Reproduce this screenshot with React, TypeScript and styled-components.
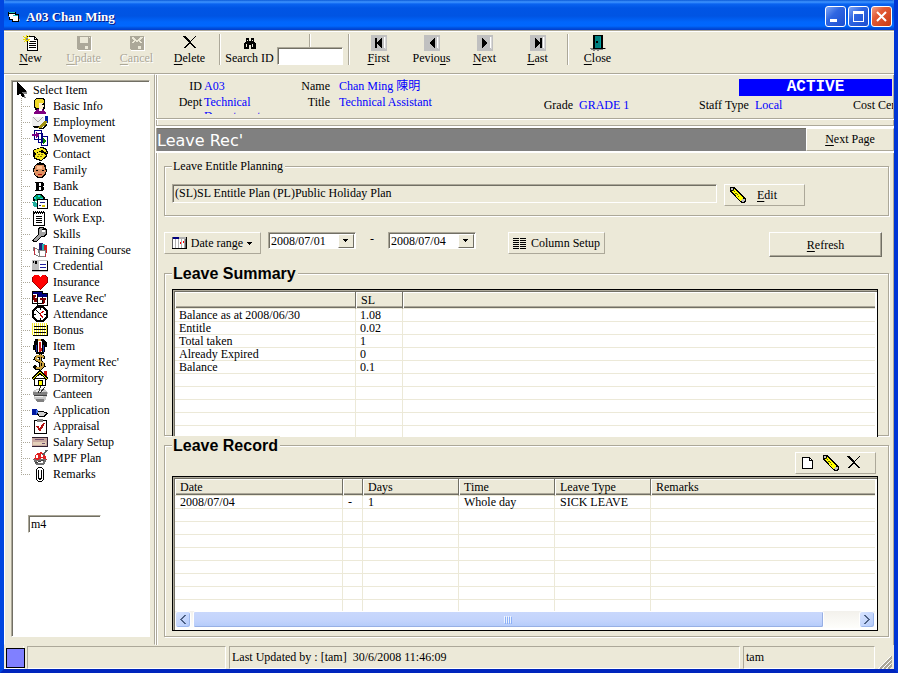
import React from "react";
import styled, { createGlobalStyle, css } from "styled-components";

const FACE = "#ece9d8";
const SHADOW = "#aca899";
const DARK = "#716f64";
const BLUE = "#0000ff";

const Global = createGlobalStyle`
  * { box-sizing: border-box; }
  body { margin: 0; background: ${FACE}; }
  body, button, input, select, table, legend {
    font-family: "Liberation Serif", "Noto Sans CJK TC", serif;
    font-size: 12px;
    line-height: 14px;
    color: #000;
  }
  u { text-underline-offset: 2px; }
`;

/* ---------- shared surfaces ---------- */

const raised = css`
  background: ${FACE};
  border: 1px solid;
  border-color: #fff ${SHADOW} ${SHADOW} #fff;
`;

const sunken = css`
  border: 1px solid;
  border-color: ${SHADOW} #fff #fff ${SHADOW};
  box-shadow: inset 1px 1px 0 ${DARK};
`;

const Svg = styled.svg`
  display: block;
  flex: none;
  shape-rendering: crispEdges;
`;

const Icon = ({ children, w = 16, h = 16 }: { children: React.ReactNode; w?: number; h?: number }) => (
  <Svg width={w} height={h} viewBox={`0 0 ${w} ${h}`} aria-hidden="true">{children}</Svg>
);

/* ---------- window frame ---------- */

const Window = styled.div`
  min-height: 100vh;
  display: flex;
  flex-direction: column;
  background: ${FACE};
  border: solid;
  border-width: 0 4px 4px;
  border-color: transparent #0035d5 #0025bd #0046e0;
  overflow: hidden;
`;

const TitleBar = styled.header`
  display: flex;
  align-items: center;
  gap: 6px;
  height: 30px;
  margin: 0 -4px;
  padding: 3px 6px 0 8px;
  border-radius: 6px 6px 0 0;
  background: linear-gradient(#0a5ad8 0, #3f95ff 2px, #0a63f0 4px, #0055e5 8px, #0054e3 16px, #0066fc 22px, #0067ff 26px, #0050dc 28px, #003dd0 30px);
`;

const Title = styled.h1`
  flex: 1;
  margin: 0;
  font-size: 13px;
  line-height: 16px;
  font-weight: bold;
  color: #fff;
  text-shadow: 1px 1px 0 #0a1883;
`;

const Controls = styled.div`
  display: flex;
  gap: 2px;
`;

const ControlButton = styled.button<{ $close?: boolean }>`
  width: 21px;
  height: 21px;
  padding: 2px;
  border: 1px solid #fff;
  border-radius: 3px;
  background: ${(p) =>
    p.$close
      ? "linear-gradient(135deg, #f0a088, #e35b36 35%, #c83a12)"
      : "linear-gradient(135deg, #7fa6f5, #2f66e2 40%, #1c4ed0)"};
`;

/* ---------- toolbar ---------- */

const Toolbar = styled.nav`
  display: flex;
  height: 43px;
  padding-top: 3px;
  border-top: 1px solid ${SHADOW};
  box-shadow: inset 0 1px 0 #fff;
`;

const ToolButton = styled.button`
  display: flex;
  flex-direction: column;
  align-items: center;
  width: 53px;
  height: 34px;
  padding: 1px 0 0;
  border: 0;
  background: none;
  white-space: nowrap;
  &:disabled { color: ${SHADOW}; text-shadow: 1px 1px 0 #fff; }
`;

const SearchLabel = styled.label`
  display: flex;
  flex-direction: column;
  align-items: center;
  width: 53px;
  padding-top: 1px;
  white-space: nowrap;
`;

const Separator = styled.span<{ $short?: boolean }>`
  width: 2px;
  height: ${(p) => (p.$short ? "13px" : "31px")};
  margin: ${(p) => (p.$short ? "0 auto" : "0 2px 0 3px")};
  border-left: 1px solid ${SHADOW};
  border-right: 1px solid #fff;
`;

const SearchField = styled.div`
  display: flex;
  flex-direction: column;
  width: 69px;
  padding: 0 2px 0 1px;
`;

const Input = styled.input`
  ${sunken}
  width: 100%;
  height: 18px;
  padding: 1px 2px;
  background: #fff;
  outline: 0;
`;

const NavTile = styled.span`
  display: block;
  background: #c0c0c0;
`;

/* ---------- body ---------- */

const Body = styled.div`
  flex: 1;
  display: flex;
  border-top: 1px solid ${SHADOW};
`;

const Sidebar = styled.aside`
  display: flex;
  width: 151px;
  padding: 5px 4px 7px 6px;
  border: 1px solid;
  border-color: #fff ${SHADOW} transparent #fff;
`;

const TreePanel = styled.div`
  ${sunken}
  flex: 1;
  padding: 1px 0 0 1px;
  background: #fff;
`;

const Tree = styled.ul`
  margin: 0;
  padding: 0;
  list-style: none;
`;

const TreeRoot = styled.div`
  display: flex;
  align-items: center;
  gap: 5px;
  height: 16px;
  padding-left: 3px;
`;

const TreeItem = styled.li`
  display: flex;
  align-items: center;
  gap: 5px;
  height: 16px;
  margin-left: 8px;
  padding-left: 11px;
  white-space: nowrap;
  background:
    repeating-linear-gradient(90deg, ${SHADOW} 0 1px, transparent 1px 2px) 0 8px / 10px 1px no-repeat,
    repeating-linear-gradient(${SHADOW} 0 1px, transparent 1px 2px) 0 0 / 1px 16px no-repeat;
  &:last-child {
    background-size: 10px 1px, 1px 9px;
  }
`;

const CodeField = styled.div`
  width: 73px;
  margin: 33px 0 0 15px;
`;

const Main = styled.main`
  flex: 1;
  min-width: 0;
  display: flex;
  flex-direction: column;
  border-left: 1px solid #fff;
  box-shadow: inset 1px 0 0 ${SHADOW}, inset 2px 0 0 #fff, inset -1px 0 0 ${SHADOW};
`;

const Employee = styled.section`
  display: flex;
  height: 46px;
  padding: 4px 1px 0;
  border: solid #fff;
  border-width: 1px 0;
  box-shadow: inset 0 -1px 0 ${SHADOW};
  overflow: hidden;
`;

const FieldGrid = styled.dl<{ $label: number; $value: number; $gap: number; $single?: boolean }>`
  display: grid;
  flex: none;
  grid-template-columns: ${(p) => p.$label}px ${(p) => p.$value}px;
  grid-auto-rows: 16px;
  column-gap: ${(p) => p.$gap}px;
  height: 35px;
  margin: 0;
  padding-top: ${(p) => (p.$single ? "19px" : "0")};
  overflow: hidden;
  dt { text-align: right; }
  dd { margin: 0; color: ${BLUE}; line-height: 14px; }
`;

const StatusGroup = styled.div`
  flex: none;
  width: 194px;
  margin-left: auto;
  overflow: hidden;
`;

const Badge = styled.div`
  width: 153px;
  margin-left: 40px;
  background: ${BLUE};
  color: #fff;
  font: bold 16px/17px "Liberation Mono", monospace;
  text-align: center;
`;

const StaffLine = styled.div`
  display: flex;
  padding-top: 2px;
  white-space: nowrap;
  span { flex: none; }
  span:nth-child(1) { width: 56px; }
  span:nth-child(2) { width: 98px; color: ${BLUE}; }
`;

const PageBar = styled.div`
  display: flex;
  height: 27px;
  margin-top: 6px;
  padding-left: 1px;
  border: solid #fff;
  border-width: 2px 0;
  box-shadow: 0 -1px 0 ${SHADOW};
`;

const PageTitle = styled.h2`
  flex: 1;
  margin: 0;
  background: #808080;
  border-top: 1px solid ${DARK};
  color: #fff;
  font: normal 16px/23px "DejaVu Sans", sans-serif;
`;

const PageButton = styled.button`
  ${raised}
  width: 88px;
  padding: 0 0 2px;
`;

const Content = styled.div`
  flex: 1;
  display: flex;
  flex-direction: column;
  padding: 6px 5px 8px 8px;
`;

const Group = styled.fieldset<{ $fill?: boolean }>`
  display: block;
  min-width: 0;
  margin: 0;
  padding: 0 10px 0 7px;
  flex: ${(p) => (p.$fill ? "1" : "none")};
  border: 1px solid ${SHADOW};
  box-shadow: inset 1px 1px 0 #fff, 1px 1px 0 #fff;
`;

const Legend = styled.legend<{ $large?: boolean }>`
  padding: 0 2px 0 1px;
  background: ${FACE};
  ${(p) =>
    p.$large && css`
      font: bold 16px/19px "Liberation Sans", Arial, sans-serif;
    `}
`;

const PlanRow = styled.div`
  display: flex;
  align-items: flex-start;
  gap: 7px;
  padding: 11px 73px 9px 0;
`;

const PlanInput = styled(Input)`
  flex: 1;
  height: 19px;
  background: ${FACE};
`;

const Button = styled.button<{ $strong?: boolean; $width: number; $height?: number }>`
  ${raised}
  display: flex;
  align-items: center;
  justify-content: center;
  gap: 4px;
  flex: none;
  width: ${(p) => p.$width}px;
  height: ${(p) => p.$height ?? 22}px;
  padding: 0 2px;
  white-space: nowrap;
  ${(p) =>
    p.$strong && css`
      border-color: #fff ${DARK} ${DARK} #fff;
      box-shadow: inset -1px -1px 0 ${SHADOW};
    `}
`;

const EditButton = styled(Button)`
  justify-content: flex-start;
  gap: 11px;
  padding-left: 5px;
`;

const FilterRow = styled.div`
  display: flex;
  align-items: flex-start;
  height: 26px;
  margin: 16px 7px 6px 0;
`;

const Dates = styled.div`
  display: flex;
  margin: 0 32px 0 7px;
`;

const Dash = styled.span`
  width: 32px;
  text-align: center;
`;

const ComboFrame = styled.div`
  ${sunken}
  position: relative;
  width: 88px;
  height: 17px;
  background: #fff;
`;

const Combo = styled.select`
  appearance: none;
  width: 100%;
  height: 15px;
  padding: 0 18px 0 2px;
  border: 0;
  background: transparent;
  outline: 0;
`;

const ComboArrow = styled.span`
  ${raised}
  border-color: #fff ${DARK} ${DARK} #fff;
  position: absolute;
  right: 1px;
  top: 1px;
  width: 16px;
  height: 14px;
  padding: 4px 3px;
  pointer-events: none;
`;

const Push = styled.span`
  flex: 1;
`;

/* ---------- tables ---------- */

const GridFrame = styled.div<{ $height: number; $open?: boolean }>`
  display: flex;
  flex-direction: column;
  height: ${(p) => p.$height}px;
  margin-top: ${(p) => (p.$open ? "6px" : "0")};
  margin-bottom: ${(p) => (p.$open ? "-2px" : "0")};
  padding: 2px 2px 0;
  border: 1px solid #000;
  border-bottom-width: ${(p) => (p.$open ? "0" : "1px")};
  background: #fff;
  box-shadow: inset 1px 1px 0 ${SHADOW}, inset 2px 2px 0 ${DARK};
`;

const GridBody = styled.div`
  flex: 1;
  min-height: 0;
  overflow: hidden;
`;

const Grid = styled.table`
  width: 100%;
  table-layout: fixed;
  border-collapse: separate;
  border-spacing: 0;
  th {
    height: 17px;
    padding: 0 5px;
    text-align: left;
    font-weight: normal;
    line-height: 13px;
    background: ${FACE};
    border-bottom: 1px solid ${FACE};
    box-shadow: inset 1px 1px 0 #fff, inset 0 -1px 0 ${DARK}, inset 0 -2px 0 ${SHADOW};
  }
  th:not(:last-child) { border-right: 1px solid ${DARK}; }
  td {
    height: 13px;
    padding: 0 4px;
    line-height: 12px;
    white-space: nowrap;
    border-bottom: 1px solid ${FACE};
  }
  td:not(:last-child) { border-right: 1px solid ${FACE}; }
`;

const RecordGrid = styled(Grid)`
  td { padding: 0 5px; }
`;

const Col = styled.col<{ $w?: number }>`
  width: ${(p) => (p.$w ? `${p.$w}px` : "auto")};
`;

const RecordTools = styled.div`
  ${raised}
  display: flex;
  align-items: center;
  gap: 7px;
  width: 81px;
  height: 22px;
  margin: -3px 2px 2px auto;
  padding-left: 4px;
`;

const IconButton = styled.button`
  padding: 0;
  border: 0;
  background: none;
`;

const ScrollBar = styled.div`
  display: flex;
  gap: 2px;
  height: 17px;
  margin-bottom: 2px;
  background: linear-gradient(#f3f1ec, #fefefb);
`;

const ScrollButton = styled.button`
  width: 16px;
  height: 17px;
  padding: 3px;
  border: 1px solid #fff;
  border-radius: 3px;
  background: linear-gradient(135deg, #d8e4ff, #b4cafa);
  box-shadow: inset -1px -1px 0 #9db8ee;
`;

const Track = styled.div`
  flex: 1;
  display: flex;
`;

const Thumb = styled.div`
  display: flex;
  align-items: center;
  justify-content: center;
  width: 95%;
  border: 1px solid #fff;
  border-radius: 2px;
  background: linear-gradient(#c9d8fc, #c2d3fc 60%, #b3cbfa);
  box-shadow: inset -1px -1px 0 #98b0e4;
`;

/* ---------- status bar ---------- */

const StatusBar = styled.footer`
  display: flex;
  align-items: stretch;
  gap: 3px;
  height: 24px;
  padding-top: 1px;
`;

const StatusPanel = styled.div<{ $w?: number }>`
  flex: ${(p) => (p.$w ? `0 0 ${p.$w}px` : "1")};
  padding: 3px 2px;
  border: 1px solid;
  border-color: ${SHADOW} #fff #fff ${SHADOW};
  white-space: pre;
`;

const Lamp = styled.div`
  flex: none;
  width: 20px;
  padding: 2px 0 2px 2px;
  border: solid #fff;
  border-width: 0 1px 1px 0;
  &::before {
    content: "";
    display: block;
    width: 17px;
    height: 18px;
    border: 1px solid #000;
    background: #8080ff;
  }
`;

const Grip = styled.div`
  display: flex;
  align-items: flex-end;
  width: 16px;
`;

/* ---------- icon drawings ---------- */

const Floppy = ({ cross }: { cross?: boolean }) => (
  <Icon>
    <path fill="#fff" d="M2 2h14v14H2z" />
    <path fill={SHADOW} d="M1 1h14v14H2l-1-1z" />
    {cross ? (
      <path fill={FACE} d="M3 2h2v1h1v1h1v1h2V4h1V3h1V2h2v2h-1v1h-1v1h1v1h1v1h-2V7h-1V6H9v1H7V6H6v1H5v1H3V7h1V6h1V5H4V4H3z" />
    ) : (
      <path fill={FACE} d="M4 2h8v6H4z" />
    )}
    <path fill={FACE} d="M9 11h3v3H9zM13 2h1v1h-1z" />
  </Icon>
);

const Cross = () => (
  <Icon>
    <path
      stroke="none"
      d="M1 1h3v1h1v1h1v1h1v1h1v1h1V5h1V4h1V3h1V2h1V1h1v1h-1v1h-1v1h-1v1h-1v1H9v2h1v1h1v1h1v1h1v1h1v1h-2v-1h-1v-1h-1v-1H9V9H7v1H6v1H5v1H4v1H2v-1h1v-1h1v-1h1V9h1V8h1V7H6V6H5V5H4V4H3V3H2V2H1z"
    />
  </Icon>
);

const Pencil = () => (
  <Icon>
    <path fill="#000" d="M0 0h4l12 11v3l-2 2h-3L0 4z" />
    <path fill="#ff0" d="M4 2l9 9-3 3-8-10z" />
    <path stroke="#606000" strokeDasharray="1 1" d="M3 3l8 9" />
    <path fill="#c0c0c0" d="M1 1h2v2H1zM12 12h2l1 1-1 2h-2l-1-1z" />
  </Icon>
);

const Arrow = ({ back, bar }: { back?: boolean; bar?: boolean }) => (
  <NavTile>
    <Icon>
      <path fill="#fff" d="M13 2h1v11h-1z" />
      <path fill="#d8d8d8" d="M14 2h1v12h-1z" />
      <g transform={back ? undefined : "translate(16 0) scale(-1 1)"}>
        <path fill="#000" d="M11 3v10h-1v-1H9v-1H8v-1H7V9H6V7h1V6h1V5h1V4h1V3z" />
        {bar && <path fill="#000" d="M4 3h2v10H4z" />}
      </g>
    </Icon>
  </NavTile>
);

const NewDoc = () => (
  <Icon>
    <path fill="#fff" stroke="#000" d="M4.500 1.500h7l3 3v11h-10z" />
    <path fill="none" stroke="#000" d="M11.500 1.500v3h3M6 6.500h7M6 8.500h7M6 10.500h7M6 12.500h7" />
    <path stroke="#e8d800" strokeWidth="1" d="M0 1l7 6M7 0L1 7M0 4.500h7M3.500 0v7" />
    <path fill="#808080" d="M3 3h2v2H3z" />
  </Icon>
);

const Binoculars = () => (
  <Icon>
    <path d="M4 3h3v3h2V3h3v3l2 3v5H9v-4H7v4H2V9l2-3z" />
    <path fill={FACE} d="M5 5h1v1H5zM10 5h1v1h-1zM4 9h1v3H4zM10 9h1v3h-1z" />
  </Icon>
);

const Door = () => (
  <Icon>
    <path fill="#808080" d="M0 13h16v1H0zM3 15h2v1H3zM7 15h2v1H7zM1 14h12v1H1z" />
    <path d="M3 0h10v13h2v1H3z" />
    <path fill="#008080" d="M5 1h6v12H5z" />
    <path fill="#00a0a0" d="M10 2h1v11h-1z" />
    <path d="M6 6h2v2H6z" />
  </Icon>
);

const TREE: [string, React.ReactNode][] = [
  ["Basic Info", <>
    <path fill="#000" d="M4 0h7l2 2v8l-2 3H4L2 9V2z" />
    <path fill="#f0d828" d="M4 1h6l2 2v2H7v5H4L3 8V3z" />
    <path fill="#fff0d0" d="M7 5h4l1 3-1 3H7z" />
    <path fill="#800080" d="M2 14l3-3h5l4 3v2H2z" />
    <path fill="#fff" d="M7 11h3v2H7z" />
    <path d="M10 6h1v1h-1z" />
  </>],
  ["Employment", <>
    <path fill="#f0f0f0" d="M0 3h12v9H0z" />
    <path fill="none" stroke="#a8a8a8" d="M1 3l5 5 5-5" />
    <path d="M1 12h9v2H3l-3-1z" />
    <path fill="#0020a0" d="M13 2h3v7h-3z" />
    <path fill="#a09010" d="M12 7h3l-1 4-5 3H6z" />
    <path d="M12 12l3-3v2l-3 4H7v-1h4z" />
  </>],
  ["Movement", <>
    <path fill="#fff" stroke="#000080" d="M2.500.500h7v9h-7zM6.500 3.500h4v9h-4zM9.500 6.500h6v9h-6z" />
    <path fill="#800080" d="M0 4h4V2l4 3-4 3V6H0z" />
    <path fill="#008000" d="M11 8l4 3-4 3z" />
  </>],
  ["Contact", <>
    <path d="M1 4l8-3 5 1 2 4-1 5-6 4-7-2-1-4z" />
    <path fill="#f5e820" d="M2 4l7-2 4 1 2 4-3-1-2-2-4 2-3 1zM4 7l4-1 5 2 1 2-5 4-6-2z" />
    <path fill="#807000" d="M6 8h2v1H6zM9 8h2v1H9zM5 10h2v1H5zM8 10h2v1H8z" />
  </>],
  ["Family", <>
    <path d="M7 0h2v1h3l2 3 1 5-2 5-3 2H6l-3-2-2-5 1-5 3-3h2z" />
    <path fill="#e09060" d="M4 3h8l2 6-2 4-3 2H7l-4-2-1-4z" />
    <path fill="#ffc090" d="M5 4h5v3H5z" />
    <path d="M4 8h2v1H4zM10 8h2v1h-2z" />
    <path fill="#b01010" d="M6 12h4v1H6z" />
  </>],
  ["Bank", <>
    <path fillRule="evenodd" d="M3 4h8v1h1v3h-1v1h1v3h-1v1H3v-1h1V5H3zM7 5v3h2V5zM7 9v3h2V9z" />
  </>],
  ["Education", <>
    <path d="M4 0h6l3 4v3H1V3z" />
    <path fill="#00a060" d="M4 1h5l2 3v3H3V3z" />
    <path fill="#20d0e0" d="M6 1h2v2H6zM8 4h3v2H8zM2 3h2v2H2z" />
    <path fill="#fff" stroke="#000" d="M5.500 5.500h10v9h-10z" />
    <path fill="#202080" d="M8 8h5v1H8zM7 11h2v1H7z" />
    <path fill="#20b0a0" d="M0 8l3-1 2 3v3H2z" />
    <path fill="#d8c000" d="M10 11h3v2h-3z" />
  </>],
  ["Work Exp.", <>
    <path fill="#fff" stroke="#000" d="M1.500 2.500h11v13h-11z" />
    <path stroke="#000" strokeDasharray="1 1" d="M1 1.500h12M2 3.500h11" />
    <path stroke="#000" d="M4 6.500h6M4 8.500h6M4 10.500h6M4 12.500h6" />
  </>],
  ["Skills", <>
    <path d="M7 1h4l4 2v5l-3 3H9l-5 5H1l-1-2 6-6V4z" />
    <path fill="#a0a0a0" d="M8 2h3l-1 2v2h3V4h1v3l-2 3H9l-5 5H2v-1l5-6V4z" />
    <path fill="#fff" d="M10 4h3v2h-3z" />
  </>],
  ["Training Course", <>
    <path fill="#202070" d="M7 1h4v8H7z" />
    <path fill="#20b0b0" d="M10 2h3v8h-3z" />
    <path fill="#d02020" d="M12 3h3v8h-3z" />
    <path fill="#fff" stroke="#808080" d="M1.500 5.500l5 2 1 7-5-2zM7.500 8.500h6v6h-6z" />
    <path fill="#c03040" d="M2 6h1v7H2zM13 12h1v3h-1z" />
  </>],
  ["Credential", <>
    <path fill="#c0c0c0" d="M0 2h16v12H0z" />
    <path fill="#fff" d="M7 3h8v10H7z" />
    <path d="M1 3h1v2H1zM3 3h2v3H3zM0 12h16v1H0zM15 3h1v10h-1z" />
    <path fill="#2020a0" d="M8 6h6v1H8zM8 9h6v1H8z" />
  </>],
  ["Insurance", <>
    <path fill="#900" d="M2 1h4l2 2 2-2h4l2 3v4l-8 8-8-8V4z" />
    <path fill="#f00" d="M2 1h4l2 2 2-2h3l2 3v4l-7 7-7-7V4z" />
  </>],
  ["Leave Rec'", <>
    <path fill="#fff" stroke="#000" d="M.500 1.500h10v12H.500zM5.500 3.500h10v12h-10z" />
    <path fill="#000080" d="M1 2h9v2H1zM6 4h9v3H6z" />
    <path fill="none" stroke="#800000" strokeWidth="2" d="M4 6H2v3h3M2 11h3M8 9h5l-2 5" />
  </>],
  ["Attendance", <>
    <path fill="#fff" stroke="#000" strokeWidth="2" d="M5 1h6l4 4v6l-4 4H5l-4-4V5z" />
    <path stroke="#c00" d="M8 8l4-3M8 8l3 4" />
    <path stroke="#000" d="M4 4l4 4M8 2v2M8 12v2M2 8h2M12 8h2" />
  </>],
  ["Bonus", <>
    <path fill="#fff" d="M1 1h15v13H1z" />
    <path fill="#f5ea30" d="M0 1h1v12H0zM2 1h1v12H2zM4 1h1v12H4zM6 1h1v12H6zM8 1h1v12H8zM10 1h1v12h-1zM12 1h1v12h-1zM14 1h1v12h-1z" />
    <path d="M2 4h12v1H2zM2 7h12v1H2zM2 10h12v1H2zM1 13h15v1H1zM15 3h1v11h-1z" />
  </>],
  ["Item", <>
    <path d="M3 1h9l3 4v9h-3v2H4v-2H1V9z" />
    <path fill="#fff" d="M1 12h2v3H1zM6 3h4v11H6zM13 9h2v5h-2z" />
    <path fill="#d01818" d="M7 4h2v3l1 5-2 3-1-3z" />
    <path fill="#2038b0" d="M4 7h1v7H4zM11 7h1v7h-1z" />
    <path fill="#e8b050" d="M6 1h3v2H6z" />
  </>],
  ["Payment Rec'", <>
    <path fill="none" stroke="#000" strokeWidth="3" d="M13 4L10 2H5L3 5l3 2 5 2 1 3-3 2H4l-2-2M8 0v16" />
    <path fill="none" stroke="#c8a040" strokeWidth="2" d="M12 4L10 2H5L4 5l3 2 4 2v3l-2 2H4" />
    <path fill="none" stroke="#c8a040" d="M8.500 0v16" />
  </>],
  ["Dormitory", <>
    <path fill="#d01010" d="M12 1h3v5h-3z" />
    <path fill="#fff" stroke="#000" d="M2.500 8.500h11v7h-11z" />
    <path fill="#ff0" stroke="#000" d="M8 .500L.500 8l1 1.500L8 3.500l6.500 6 1-1.500z" />
    <path fill="#ff0" stroke="#000" d="M6.500 10.500h4v5h-4z" />
  </>],
  ["Canteen", <>
    <path fill="#c8c8c8" d="M1 5l4-2h7l4 3-2 7-3 3H5l-3-3z" />
    <path fill="#808080" d="M1 6h14v3H1zM4 13h8v3H5z" />
    <path fill="#eee" d="M4 4h7v2H4zM3 10h8v1H3z" />
    <path stroke="#303030" d="M9 0L6 7M13 1L8 7" />
    <path fill="#404040" d="M2 9h13v1H2z" />
  </>],
  ["Application", <>
    <path fill="#0018a0" d="M0 7h5v6H0z" />
    <path fill="#4070e0" d="M4 8h2v4H4z" />
    <path d="M6 9h5l5 2-1 2-3 2H7l-2-2z" />
    <path fill="#d0d0d0" d="M6 10h4l4 1-3 3H7z" />
  </>],
  ["Appraisal", <>
    <path fill="#fff" stroke="#000" d="M2.500 2.500h12v13h-12z" />
    <path fill="#808080" d="M5 1h6v3H5z" />
    <path fill="none" stroke="#b01010" strokeWidth="2" d="M5 8l3 4 4-7" />
  </>],
  ["Salary Setup", <>
    <path fill="#302030" d="M0 3h16v10H0z" />
    <path fill="#c8a8a0" d="M0 4h15v8H0z" />
    <path fill="#e4d0b8" d="M1 8h13v3H1z" />
    <path fill="#705070" d="M3 5h9v1H3zM10 9h3v1h-3z" />
  </>],
  ["MPF Plan", <>
    <path fill="#707070" d="M1 9h14l-3 6H4z" />
    <path fill="#e02020" d="M2 9l2-5 5-2 4 3 2 5-5-2-4 2z" />
    <path fill="#fff" d="M4 5h2v3H4zM9 4h2v3H9zM5 11h6v2H5z" />
    <path stroke="#606060" strokeWidth="2" d="M11 5l4-5" />
    <path stroke="#404040" d="M3 13l9-3" />
  </>],
  ["Remarks", <>
    <path fill="none" stroke="#000" d="M4.500 11V3.500l2-2h3l2 2v10l-2 2h-3l-2-2v-3M6.500 4v8l1 1h1l1-1V4" />
  </>],
];

const Calendar = () => (
  <Icon w={15}>
    <path fill="#fff" stroke="#606060" d="M.500 2.500h13v11H.500z" />
    <path fill="#000080" d="M1 2h6v2H1z" />
    <path fill="#b0b0b0" d="M7 2h7v2H7zM3 4h1v9H3zM6 4h1v9H6zM9 4h1v9H9zM12 4h1v9h-1z" />
    <path fill="#f00" d="M8 7h1v2H8zM11 6h1v2h-1z" />
    <path d="M14 2h1v12h-1zM0 13h15v1H0z" />
  </Icon>
);

const DropMark = () => (
  <Icon w={6} h={3}><path d="M0 0h5v1H4v1H3v1H2V2H1V1H0z" /></Icon>
);

const Dropdown = ({ label, value }: { label: string; value: string }) => (
  <ComboFrame>
    <Combo aria-label={label} defaultValue={value}>
      <option>{value}</option>
    </Combo>
    <ComboArrow><Icon w={8} h={4}><path d="M1 0h5v1H5v1H4v1H3V2H2V1H1z" /></Icon></ComboArrow>
  </ComboFrame>
);

const summary = [
  ["Balance as at 2008/06/30", "1.08"],
  ["Entitle", "0.02"],
  ["Total taken", "1"],
  ["Already Expired", "0"],
  ["Balance", "0.1"],
  [], [], [], [], [],
];

const records = [["2008/07/04", "-", "1", "Whole day", "SICK LEAVE", ""], [], [], [], [], [], [], [], []];

const Rows = ({ rows, columns }: { rows: string[][]; columns: number }) => (
  <tbody>
    {rows.map((row, r) => (
      <tr key={r}>
        {Array.from({ length: columns }, (_, c) => <td key={c}>{row[c]}</td>)}
      </tr>
    ))}
  </tbody>
);

export default function App() {
  return (
    <>
      <Global />
      <Window>
        <TitleBar>
          <Icon w={12} h={12}>
            <path fill="#000" d="M0 1h8v2h3v8H4V9H1z" />
            <path fill="#fff" d="M1 3h6v5H2zM4 5h6v5H5z" />
            <path fill="#20c0c0" d="M1 1h6v1H1zM5 4h5v1H5z" />
            <path fill="#a0a0a0" d="M11 8h1v2h-1z" />
          </Icon>
          <Title>A03 Chan Ming</Title>
          <Controls>
            <ControlButton aria-label="Minimize">
              <Icon w={15} h={15}><path fill="#fff" d="M2 10h7v3H2z" /></Icon>
            </ControlButton>
            <ControlButton aria-label="Maximize">
              <Icon w={15} h={15}><path fill="#fff" fillRule="evenodd" d="M2 2h11v11H2zM3 5v7h9V5z" /></Icon>
            </ControlButton>
            <ControlButton $close aria-label="Close window">
              <Icon w={15} h={15}><path fill="none" stroke="#fff" strokeWidth="2" shapeRendering="auto" d="M3 3l9 9M12 3l-9 9" /></Icon>
            </ControlButton>
          </Controls>
        </TitleBar>

        <Toolbar>
          <ToolButton><NewDoc /><span><u>N</u>ew</span></ToolButton>
          <ToolButton disabled><Floppy /><span><u>U</u>pdate</span></ToolButton>
          <ToolButton disabled><Floppy cross /><span><u>C</u>ancel</span></ToolButton>
          <ToolButton><Cross /><span><u>D</u>elete</span></ToolButton>
          <Separator />
          <SearchLabel htmlFor="search"><Binoculars />Search ID</SearchLabel>
          <SearchField>
            <Separator $short />
            <Input id="search" />
          </SearchField>
          <Separator />
          <ToolButton><Arrow back bar /><span><u>F</u>irst</span></ToolButton>
          <ToolButton><Arrow back /><span>Pevio<u>u</u>s</span></ToolButton>
          <ToolButton><Arrow /><span><u>N</u>ext</span></ToolButton>
          <ToolButton><Arrow bar /><span><u>L</u>ast</span></ToolButton>
          <Separator />
          <ToolButton><Door /><span><u>C</u>lose</span></ToolButton>
        </Toolbar>

        <Body>
          <Sidebar>
            <TreePanel>
              <TreeRoot>
                <Icon w={12}>
                  <path fill="#808080" d="M2 1l9 9v2H8l2 4H8z" />
                  <path d="M1 0v13h1l2-2 2 4h2v-2l-2-3h4V9z" />
                </Icon>
                Select Item
              </TreeRoot>
              <Tree>
                {TREE.map(([label, art]) => (
                  <TreeItem key={label}><Icon>{art}</Icon>{label}</TreeItem>
                ))}
              </Tree>
              <CodeField><Input aria-label="Code" defaultValue="m4" /></CodeField>
            </TreePanel>
          </Sidebar>

          <Main>
            <Employee>
              <FieldGrid $label={45} $value={60} $gap={2}>
                <dt>ID</dt><dd>A03</dd>
                <dt>Dept</dt><dd>Technical Department</dd>
              </FieldGrid>
              <FieldGrid $label={66} $value={181} $gap={9}>
                <dt>Name</dt><dd>Chan Ming 陳明</dd>
                <dt>Title</dt><dd>Technical Assistant</dd>
              </FieldGrid>
              <FieldGrid $label={53} $value={60} $gap={6} $single>
                <dt>Grade</dt><dd>GRADE 1</dd>
              </FieldGrid>
              <StatusGroup>
                <Badge>ACTIVE</Badge>
                <StaffLine><span>Staff Type</span><span>Local</span><span>Cost Center</span></StaffLine>
              </StatusGroup>
            </Employee>

            <PageBar>
              <PageTitle>Leave Rec'</PageTitle>
              <PageButton><u>N</u>ext Page</PageButton>
            </PageBar>

            <Content>
              <Group>
                <Legend>Leave Entitle Planning</Legend>
                <PlanRow>
                  <PlanInput aria-label="Leave entitle plan" readOnly value="(SL)SL Entitle Plan (PL)Public Holiday Plan" />
                  <EditButton $width={81}><Pencil /><span><u>E</u>dit</span></EditButton>
                </PlanRow>
              </Group>

              <FilterRow>
                <Button $width={97}><Calendar /><span>Date range</span><DropMark /></Button>
                <Dates>
                  <Dropdown label="From date" value="2008/07/01" />
                  <Dash>-</Dash>
                  <Dropdown label="To date" value="2008/07/04" />
                </Dates>
                <Button $width={97}>
                  <Icon w={14} h={12}>
                    <path d="M0 1h6v1H0zM0 3h6v1H0zM0 5h6v1H0zM0 7h6v1H0zM0 9h6v1H0zM0 11h6v1H0zM7 1h6v1H7zM7 3h6v1H7zM7 5h6v1H7zM7 7h6v1H7zM7 9h6v1H7zM7 11h6v1H7z" />
                  </Icon>
                  <span>Column Setup</span>
                </Button>
                <Push />
                <Button $strong $width={113} $height={25}><span><u>R</u>efresh</span></Button>
              </FilterRow>

              <Group>
                <Legend $large>Leave Summary</Legend>
                <GridFrame $height={148} $open>
                  <GridBody>
                    <Grid>
                      <colgroup><Col $w={181} /><Col $w={47} /><Col /></colgroup>
                      <thead><tr><th aria-label="Item" /><th>SL</th><th aria-label="Other" /></tr></thead>
                      <Rows rows={summary} columns={3} />
                    </Grid>
                  </GridBody>
                </GridFrame>
              </Group>

              <Group $fill>
                <Legend $large>Leave Record</Legend>
                <RecordTools>
                  <IconButton aria-label="New record">
                    <Icon><path fill="#fff" stroke="#000" d="M2.500 2.500h7l3 3v8h-10z" /><path fill="none" stroke="#000" d="M9.500 2.500v3h3" /></Icon>
                  </IconButton>
                  <IconButton aria-label="Edit record"><Pencil /></IconButton>
                  <IconButton aria-label="Delete record"><Cross /></IconButton>
                </RecordTools>
                <GridFrame $height={155}>
                  <GridBody>
                    <RecordGrid>
                      <colgroup><Col $w={168} /><Col $w={20} /><Col $w={96} /><Col $w={96} /><Col $w={96} /><Col /></colgroup>
                      <thead>
                        <tr><th>Date</th><th aria-label="To" /><th>Days</th><th>Time</th><th>Leave Type</th><th>Remarks</th></tr>
                      </thead>
                      <Rows rows={records} columns={6} />
                    </RecordGrid>
                  </GridBody>
                  <ScrollBar>
                    <ScrollButton aria-label="Scroll left">
                      <Icon w={8} h={9}><path fill="#4d6185" d="M5 0h2v1H6v1H5v1H4v1H3v1h1v1h1v1h1v1h1v1H5V8H4V7H3V6H2V5H1V4h1V3h1V2h1V1h1z" /></Icon>
                    </ScrollButton>
                    <Track>
                      <Thumb><Icon w={9} h={8}><path stroke="#eef4fe" d="M.500 0v7M2.500 0v7M4.500 0v7M6.500 0v7" /><path stroke="#8cb0f8" d="M1.500 1v7M3.500 1v7M5.500 1v7M7.500 1v7" /></Icon></Thumb>
                    </Track>
                    <ScrollButton aria-label="Scroll right">
                      <Icon w={8} h={9}><path fill="#4d6185" d="M1 0h2v1h1v1h1v1h1v1h1v1H6v1H5v1H4v1H3v1H1V8h1V7h1V6h1V5h1V4H4V3H3V2H2V1H1z" /></Icon>
                    </ScrollButton>
                  </ScrollBar>
                </GridFrame>
              </Group>
            </Content>
          </Main>
        </Body>

        <StatusBar>
          <Lamp />
          <StatusPanel $w={199} />
          <StatusPanel>{"Last Updated by : [tam]  30/6/2008 11:46:09"}</StatusPanel>
          <StatusPanel $w={132}>tam</StatusPanel>
          <Grip>
            <Icon w={14} h={13}>
              <path stroke="#fff" d="M0 13L13 0M4 13l9-9M8 13l5-5" />
              <path stroke={SHADOW} strokeWidth="2" d="M2 13L14 1M6 13l8-8M10 13l4-4" />
            </Icon>
          </Grip>
        </StatusBar>
      </Window>
    </>
  );
}
